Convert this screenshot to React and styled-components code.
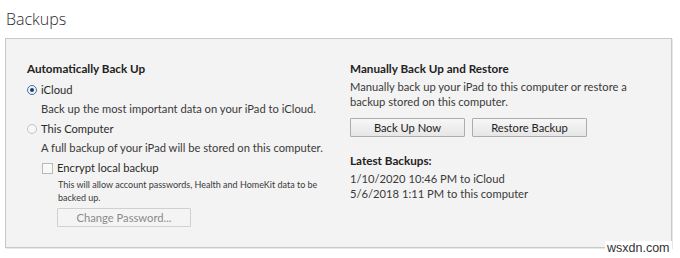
import React from 'react';
import styled, { createGlobalStyle } from 'styled-components';

const GlobalStyle = createGlobalStyle`
  body {
    margin: 0;
    background: #ffffff;
    font-family: Lato, "Open Sans", sans-serif;
    color: #333333;
  }
`;

const Page = styled.div`
  position: relative;
  width: 680px;
  height: 258px;
  padding: 8px 0 0 5px;
  box-sizing: border-box;
`;

const Title = styled.h1`
  margin: 0 0 7px 1px;
  font-family: "Open Sans", sans-serif;
  font-size: 16px;
  font-weight: 300;
  line-height: 23px;
  color: #2b2b2b;
`;

const Panel = styled.section`
  width: 667px;
  height: 210px;
  box-sizing: border-box;
  background: #f3f3f3;
  border: 1px solid #c8c8c8;
  box-shadow: 1px 1px 0 #e6e6e6;
  padding: 21px 0 0 21px;
  display: grid;
  grid-template-columns: 323px 1fr;
`;

const Column = styled.div`
  display: flex;
  flex-direction: column;
  white-space: nowrap;
`;

const Heading = styled.h2`
  margin: ${(p) => p.$mt || 0}px 0 0 0;
  font-size: 11.7px;
  font-weight: 700;
  line-height: 16px;
  color: #222;
`;

const Text = styled.p`
  margin: ${(p) => p.$mt || 0}px 0 0 ${(p) => p.$ml || 0}px;
  font-size: 11.2px;
  line-height: 15px;
  color: #3a3a3a;
`;

const SmallText = styled.p`
  margin: 2px 0 0 31px;
  font-size: 9px;
  line-height: 13px;
  color: #3a3a3a;
`;

const OptionRow = styled.label`
  display: flex;
  align-items: center;
  gap: 4px;
  margin: ${(p) => p.$mt || 0}px 0 0 ${(p) => p.$ml || 0}px;
  font-size: 11.2px;
  line-height: 16px;
  color: #2b2b2b;
`;

const Radio = styled.span`
  width: 10px;
  height: 10px;
  border-radius: 50%;
  box-sizing: border-box;
  border: 1px solid ${(p) => (p.$checked ? '#4a6f9c' : '#c4c4c4')};
  background: ${(p) => (p.$checked ? '#eef3f9' : '#f7f7f7')};
  display: flex;
  align-items: center;
  justify-content: center;
  &::after {
    content: '';
    width: 4px;
    height: 4px;
    border-radius: 50%;
    background: ${(p) => (p.$checked ? '#1f3f6a' : 'transparent')};
  }
`;

const Checkbox = styled.span`
  width: 11px;
  height: 11px;
  box-sizing: border-box;
  border: 1px solid #b9b9b9;
  background: #f8f8f8;
`;

const ButtonRow = styled.div`
  display: flex;
  gap: 7px;
  margin-top: 9px;
`;

const Button = styled.button`
  width: ${(p) => p.$w || 115}px;
  height: 19px;
  margin: ${(p) => p.$mt || 0}px 0 0 ${(p) => p.$ml || 0}px;
  padding: 0;
  border: 1px solid ${(p) => (p.$disabled ? '#d0d0d0' : '#adadad')};
  border-radius: 1px;
  background: ${(p) =>
    p.$disabled ? '#f4f4f4' : 'linear-gradient(#f7f7f7, #e6e6e6)'};
  font-family: Lato, "Open Sans", sans-serif;
  font-size: 11.2px;
  line-height: 17px;
  color: ${(p) => (p.$disabled ? '#8a8a8a' : '#222')};
`;

const Watermark = styled.span`
  position: absolute;
  left: 605px;
  top: 241px;
  padding: 0 2px;
  background: #fff;
  font-family: "Liberation Sans", Arial, sans-serif;
  font-size: 12.5px;
  line-height: 14px;
  color: #333;
`;

export default function App() {
  return (
    <>
      <GlobalStyle />
      <Page>
        <Title>Backups</Title>
        <Panel>
          <Column>
            <Heading>Automatically Back Up</Heading>
            <OptionRow $mt={5.5}>
              <Radio $checked />
              iCloud
            </OptionRow>
            <Text $ml={14} $mt={3}>Back up the most important data on your iPad to iCloud.</Text>
            <OptionRow $mt={5.5}>
              <Radio />
              This Computer
            </OptionRow>
            <Text $ml={14} $mt={2.5}>A full backup of your iPad will be stored on this computer.</Text>
            <OptionRow $ml={15} $mt={5.5}>
              <Checkbox />
              Encrypt local backup
            </OptionRow>
            <SmallText>
              This will allow account passwords, Health and HomeKit data to be
              <br />
              backed up.
            </SmallText>
            <Button $disabled $w={134} $ml={30} $mt={4}>
              Change Password...
            </Button>
          </Column>
          <Column>
            <Heading>Manually Back Up and Restore</Heading>
            <Text $mt={3}>Manually back up your iPad to this computer or restore a</Text>
            <Text>backup stored on this computer.</Text>
            <ButtonRow>
              <Button $w={115}>Back Up Now</Button>
              <Button $w={115}>Restore Backup</Button>
            </ButtonRow>
            <Heading as="h3" $mt={15}>Latest Backups:</Heading>
            <Text $mt={3}>1/10/2020 10:46 PM to iCloud</Text>
            <Text>5/6/2018 1:11 PM to this computer</Text>
          </Column>
        </Panel>
        <Watermark>wsxdn.com</Watermark>
      </Page>
    </>
  );
}
